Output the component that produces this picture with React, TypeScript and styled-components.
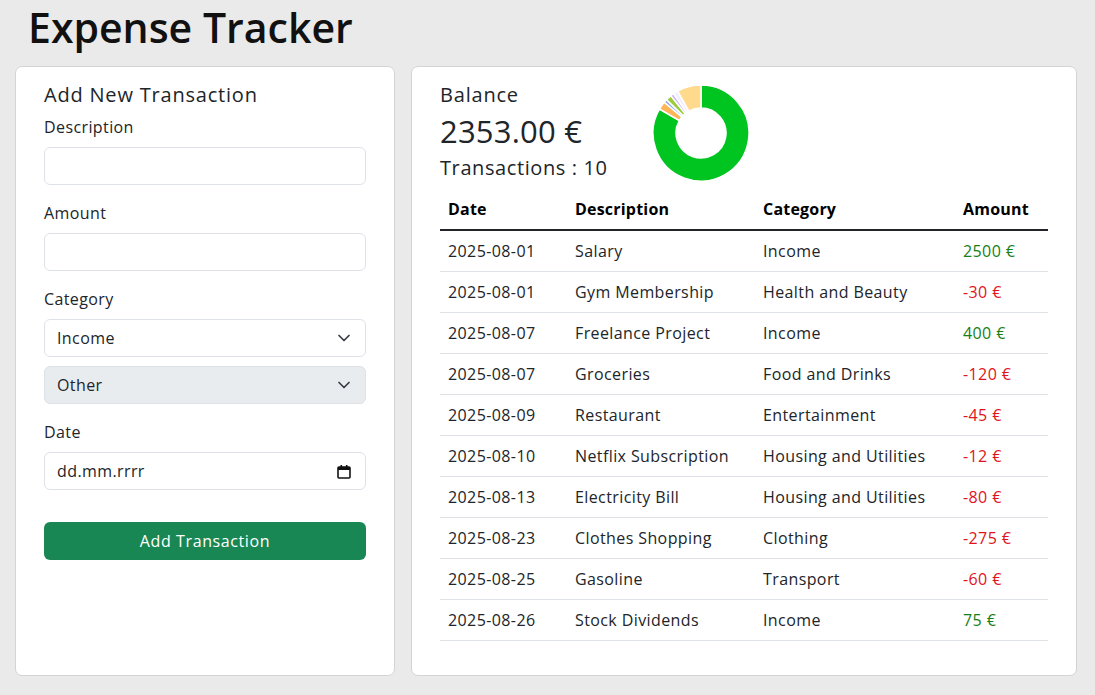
import React from "react";
import styled, { createGlobalStyle } from "styled-components";

const GlobalStyle = createGlobalStyle`
  html, body { margin: 0; padding: 0; background: #eaeaea; }
  body { font-family: "Open Sans", "DejaVu Sans", sans-serif; color: #212529; letter-spacing: 0.4px; }
  * { box-sizing: border-box; }
`;

const Page = styled.div`
  width: 1095px;
  height: 695px;
  padding: 3px 18px 0 15px;
  overflow: hidden;
`;

const Title = styled.h1`
  margin: 0 0 15px 13px;
  font-size: 41px;
  line-height: 48px;
  font-weight: 600;
  letter-spacing: 0;
  color: #111;
`;

const Columns = styled.div`
  display: flex;
  gap: 16px;
  align-items: stretch;
`;

const Card = styled.section<{ $width: number }>`
  width: ${(p) => p.$width}px;
  background: #fff;
  border: 1px solid #d4d4d4;
  border-radius: 7px;
  padding: 16px 28px 15px;
`;

const FormTitle = styled.h2`
  margin: 0 0 8px;
  font-size: 20px;
  line-height: 24px;
  font-weight: 500;
  letter-spacing: 0.8px;
`;

const Group = styled.div`
  margin-bottom: 16px;
`;

const Label = styled.div`
  font-size: 16px;
  line-height: 24px;
  margin-bottom: 8px;
`;

const Field = styled.div<{ $disabled?: boolean }>`
  height: 38px;
  border: 1px solid #dee2e6;
  border-radius: 6px;
  background: ${(p) => (p.$disabled ? "#e9ecef" : "#fff")};
  display: flex;
  align-items: center;
  justify-content: space-between;
  padding: 0 14px 0 12px;
  font-size: 16px;
  color: #212529;
`;

const StackGap = styled.div`
  height: 9px;
`;

const SubmitButton = styled.button`
  width: 100%;
  height: 38px;
  margin-top: 16px;
  border: none;
  border-radius: 6px;
  background: #198754;
  color: #fff;
  font-family: inherit;
  font-size: 16px;
  font-weight: 500;
  letter-spacing: 0.6px;
`;

const Summary = styled.div`
  display: grid;
  grid-template-columns: 213px 96px;
  margin-bottom: 8px;
`;

const SummaryText = styled.div`
  display: flex;
  flex-direction: column;
`;

const BalanceLabel = styled.div`
  font-size: 20px;
  line-height: 24px;
  font-weight: 500;
  letter-spacing: 0.8px;
  margin-bottom: 6px;
`;

const BalanceValue = styled.div`
  font-size: 31px;
  line-height: 37px;
  font-weight: 500;
  letter-spacing: 0.2px;
  margin-bottom: 6px;
`;

const Count = styled.div`
  font-size: 20px;
  line-height: 24px;
  font-weight: 500;
  letter-spacing: 0.6px;
`;

const Donut = styled.svg`
  margin-top: 2px;
  display: block;
`;

const Table = styled.table`
  width: 100%;
  border-collapse: collapse;
  font-size: 16px;
  margin-bottom: 19px;
`;

const Th = styled.th<{ $w: number }>`
  width: ${(p) => p.$w}px;
  text-align: left;
  font-weight: 700;
  color: #000;
  height: 41px;
  padding: 0 8px;
  letter-spacing: 0.2px;
  border-bottom: 2px solid #212529;
`;

const Td = styled.td<{ $tone?: "pos" | "neg" }>`
  height: 41px;
  padding: 0 8px;
  border-bottom: 1px solid #dee2e6;
  color: ${(p) => (p.$tone === "pos" ? "#168016" : p.$tone === "neg" ? "#e0141b" : "#212529")};
`;

const Chevron = () => (
  <svg width="14" height="10" viewBox="0 0 16 12" fill="none">
    <path d="M2 3l6 6 6-6" stroke="#343a40" strokeWidth="2" strokeLinecap="round" strokeLinejoin="round" />
  </svg>
);

const CalendarIcon = () => (
  <svg width="14" height="15" viewBox="0 0 14 15">
    <rect x="1" y="3" width="12" height="11" rx="1" fill="none" stroke="#111" strokeWidth="1.6" />
    <rect x="1" y="3" width="12" height="3" fill="#111" />
    <rect x="3.5" y="1" width="1.6" height="3" fill="#111" />
    <rect x="8.9" y="1" width="1.6" height="3" fill="#111" />
  </svg>
);

type Tx = { date: string; desc: string; cat: string; amount: number };

const transactions: Tx[] = [
  { date: "2025-08-01", desc: "Salary", cat: "Income", amount: 2500 },
  { date: "2025-08-01", desc: "Gym Membership", cat: "Health and Beauty", amount: -30 },
  { date: "2025-08-07", desc: "Freelance Project", cat: "Income", amount: 400 },
  { date: "2025-08-07", desc: "Groceries", cat: "Food and Drinks", amount: -120 },
  { date: "2025-08-09", desc: "Restaurant", cat: "Entertainment", amount: -45 },
  { date: "2025-08-10", desc: "Netflix Subscription", cat: "Housing and Utilities", amount: -12 },
  { date: "2025-08-13", desc: "Electricity Bill", cat: "Housing and Utilities", amount: -80 },
  { date: "2025-08-23", desc: "Clothes Shopping", cat: "Clothing", amount: -275 },
  { date: "2025-08-25", desc: "Gasoline", cat: "Transport", amount: -60 },
  { date: "2025-08-26", desc: "Stock Dividends", cat: "Income", amount: 75 },
];

const segments: { from: number; to: number; color: string }[] = [
  { from: 0, to: 300, color: "#00c41f" },
  { from: 300, to: 310, color: "#fdb558" },
  { from: 310, to: 314, color: "#82a8ee" },
  { from: 314, to: 321, color: "#9ccb3e" },
  { from: 321, to: 325, color: "#c8b4f4" },
  { from: 325, to: 331, color: "#f3f0fb" },
  { from: 331, to: 360, color: "#ffd98c" },
];

function arcPath(cx: number, cy: number, r0: number, r1: number, a0: number, a1: number) {
  const rad = (a: number) => ((a - 90) * Math.PI) / 180;
  const p = (r: number, a: number) => [cx + r * Math.cos(rad(a)), cy + r * Math.sin(rad(a))];
  const large = a1 - a0 > 180 ? 1 : 0;
  const [x0, y0] = p(r1, a0);
  const [x1, y1] = p(r1, a1);
  const [x2, y2] = p(r0, a1);
  const [x3, y3] = p(r0, a0);
  return `M${x0} ${y0} A${r1} ${r1} 0 ${large} 1 ${x1} ${y1} L${x2} ${y2} A${r0} ${r0} 0 ${large} 0 ${x3} ${y3} Z`;
}

export default function App() {
  return (
    <Page>
      <GlobalStyle />
      <Title>Expense Tracker</Title>
      <Columns>
        <Card $width={380}>
          <FormTitle>Add New Transaction</FormTitle>
          <Group>
            <Label>Description</Label>
            <Field />
          </Group>
          <Group>
            <Label>Amount</Label>
            <Field />
          </Group>
          <Group>
            <Label>Category</Label>
            <Field>
              <span>Income</span>
              <Chevron />
            </Field>
            <StackGap />
            <Field $disabled>
              <span>Other</span>
              <Chevron />
            </Field>
          </Group>
          <Group>
            <Label>Date</Label>
            <Field>
              <span>dd.mm.rrrr</span>
              <CalendarIcon />
            </Field>
          </Group>
          <SubmitButton>Add Transaction</SubmitButton>
        </Card>
        <Card $width={666}>
          <Summary>
            <SummaryText>
              <BalanceLabel>Balance</BalanceLabel>
              <BalanceValue>2353.00 €</BalanceValue>
              <Count>Transactions : 10</Count>
            </SummaryText>
            <Donut width="96" height="96" viewBox="0 0 96 96">
              {segments.map((s, i) => (
                <path key={i} d={arcPath(48, 48, 25, 48, s.from, s.to)} fill={s.color} stroke="#fff" strokeWidth="1.5" />
              ))}
            </Donut>
          </Summary>
          <Table>
            <thead>
              <tr>
                <Th $w={127}>Date</Th>
                <Th $w={188}>Description</Th>
                <Th $w={200}>Category</Th>
                <Th $w={93}>Amount</Th>
              </tr>
            </thead>
            <tbody>
              {transactions.map((t, i) => (
                <tr key={i}>
                  <Td>{t.date}</Td>
                  <Td>{t.desc}</Td>
                  <Td>{t.cat}</Td>
                  <Td $tone={t.amount >= 0 ? "pos" : "neg"}>{t.amount} €</Td>
                </tr>
              ))}
            </tbody>
          </Table>
        </Card>
      </Columns>
    </Page>
  );
}
